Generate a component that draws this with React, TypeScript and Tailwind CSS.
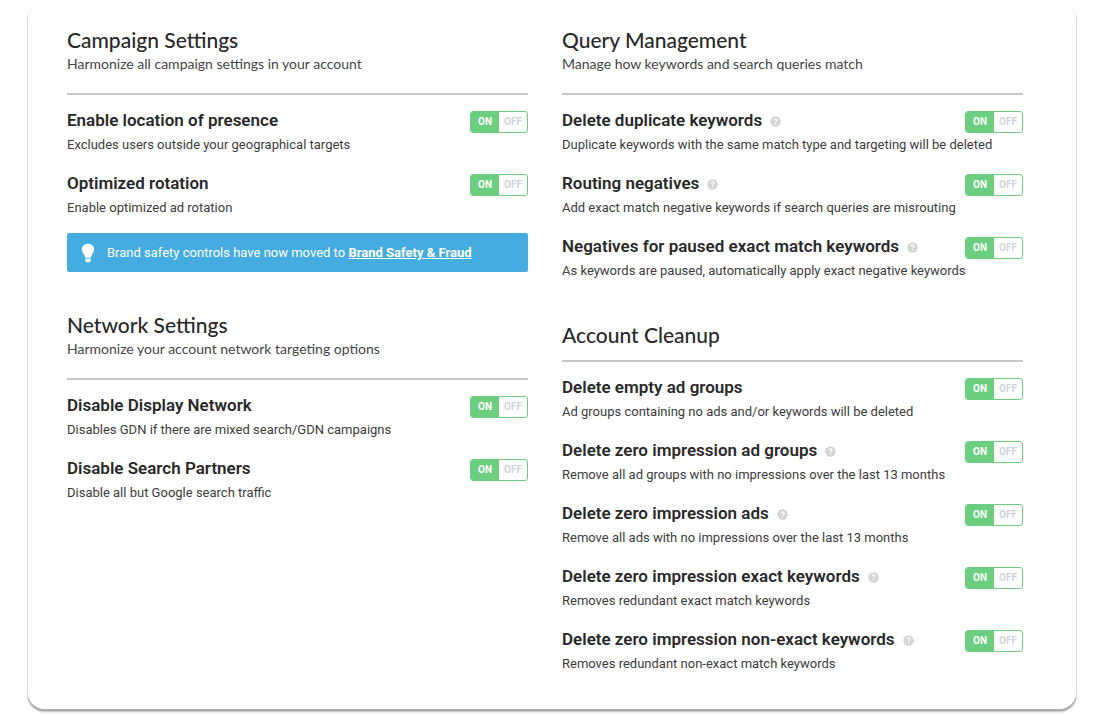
import { useState } from "react";

type Setting = {
  title: string;
  description: string;
  help?: boolean;
};

const campaignSettings: Setting[] = [
  { title: "Enable location of presence", description: "Excludes users outside your geographical targets" },
  { title: "Optimized rotation", description: "Enable optimized ad rotation" },
];

const networkSettings: Setting[] = [
  { title: "Disable Display Network", description: "Disables GDN if there are mixed search/GDN campaigns" },
  { title: "Disable Search Partners", description: "Disable all but Google search traffic" },
];

const querySettings: Setting[] = [
  {
    title: "Delete duplicate keywords",
    description: "Duplicate keywords with the same match type and targeting will be deleted",
    help: true,
  },
  {
    title: "Routing negatives",
    description: "Add exact match negative keywords if search queries are misrouting",
    help: true,
  },
  {
    title: "Negatives for paused exact match keywords",
    description: "As keywords are paused, automatically apply exact negative keywords",
    help: true,
  },
];

const cleanupSettings: Setting[] = [
  { title: "Delete empty ad groups", description: "Ad groups containing no ads and/or keywords will be deleted" },
  {
    title: "Delete zero impression ad groups",
    description: "Remove all ad groups with no impressions over the last 13 months",
    help: true,
  },
  {
    title: "Delete zero impression ads",
    description: "Remove all ads with no impressions over the last 13 months",
    help: true,
  },
  {
    title: "Delete zero impression exact keywords",
    description: "Removes redundant exact match keywords",
    help: true,
  },
  {
    title: "Delete zero impression non-exact keywords",
    description: "Removes redundant non-exact match keywords",
    help: true,
  },
];

function Toggle({ label }: { label: string }) {
  const [on, setOn] = useState(true);

  return (
    <button
      type="button"
      role="switch"
      aria-checked={on}
      aria-label={label}
      onClick={() => setOn(!on)}
      className="flex h-[22px] w-[58px] shrink-0 overflow-hidden rounded-[3px] border border-[#6bcf7f] bg-white text-[10px] leading-5 font-bold"
    >
      <span className={on ? "w-7 bg-[#6bcf7f] text-white" : "w-7 text-[#cfd4dc]"}>ON</span>
      <span className={on ? "w-7 text-[#cfd4dc]" : "w-7 bg-[#6bcf7f] text-white"}>OFF</span>
    </button>
  );
}

function HelpIcon() {
  return (
    <svg className="mt-0.5 h-[11px] w-[11px]" viewBox="0 0 11 11" fill="none" aria-hidden="true">
      <circle cx="5.5" cy="5.5" r="5.2" fill="#d4d4d4" />
      <path d="M4 4.4C4 3.4 4.7 2.9 5.5 2.9S7 3.4 7 4.2C7 5.1 5.6 5.2 5.6 6.3" stroke="#fff" strokeWidth="1.2" />
      <rect x="5" y="7.1" width="1.2" height="1.2" fill="#fff" />
    </svg>
  );
}

function SettingList({ settings }: { settings: Setting[] }) {
  return (
    <ul>
      {settings.map((setting) => (
        <li key={setting.title} className="pb-[13px]">
          <div className="flex items-end justify-between">
            <h3 className="flex items-center gap-2 text-[17px] leading-[26px] font-semibold text-[#292929]">
              {setting.title}
              {setting.help && <HelpIcon />}
            </h3>
            <Toggle label={setting.title} />
          </div>
          <p className="text-[13px] leading-6 text-[#3c3c3c]">{setting.description}</p>
        </li>
      ))}
    </ul>
  );
}

function SectionHeader({ title, subtitle }: { title: string; subtitle?: string }) {
  return (
    <header className="mb-3 border-b-2 border-[#c8c8c8] font-['Lato',sans-serif]">
      <h2 className="text-[21px] leading-7 font-medium text-[#292929]">{title}</h2>
      {subtitle ? <p className="pb-[19px] text-sm leading-5 text-[#444]">{subtitle}</p> : <div className="h-[11px]" />}
    </header>
  );
}

export default function App() {
  return (
    <div className="bg-white pt-[3px] pr-6 pb-1 pl-7 font-['Roboto',sans-serif]">
      <main className="grid grid-cols-2 gap-[34px] rounded-[16px] bg-white pt-[23px] pr-[53px] pb-5 pl-[39px] shadow-[0_2px_0_#aaa,0_3px_2px_#bbb,0_1px_0_1px_#e8e8e8]">
        <div>
          <section>
            <SectionHeader title="Campaign Settings" subtitle="Harmonize all campaign settings in your account" />
            <SettingList settings={campaignSettings} />
            <div className="flex h-[39px] items-center gap-3 rounded-[2px] bg-[#44ace0] pl-[14px] text-[13px] text-white">
              <svg className="h-5 w-[14px]" viewBox="0 0 14 20" fill="currentColor" aria-hidden="true">
                <path d="M7 .8C3.4.8.8 3.4.8 6.6c0 2.3 1.4 3.7 2.3 5.1.5.8.7 1.6.8 2.8h6.2c.1-1.2.3-2 .8-2.8.9-1.4 2.3-2.8 2.3-5.1C13.2 3.4 10.6.8 7 .8z" />
                <path d="M4.2 15.5h5.6v1.6c0 1.5-1 2.5-2.8 2.5s-2.8-1-2.8-2.5z" />
              </svg>
              <p>
                Brand safety controls have now moved to{" "}
                <a href="#brand-safety" className="font-bold underline">
                  Brand Safety &amp; Fraud
                </a>
              </p>
            </div>
          </section>

          <section className="mt-[39px]">
            <SectionHeader title="Network Settings" subtitle="Harmonize your account network targeting options" />
            <SettingList settings={networkSettings} />
          </section>
        </div>

        <div>
          <section>
            <SectionHeader title="Query Management" subtitle="Manage how keywords and search queries match" />
            <SettingList settings={querySettings} />
          </section>

          <section className="mt-[25px]">
            <SectionHeader title="Account Cleanup" />
            <SettingList settings={cleanupSettings} />
          </section>
        </div>
      </main>
    </div>
  );
}
